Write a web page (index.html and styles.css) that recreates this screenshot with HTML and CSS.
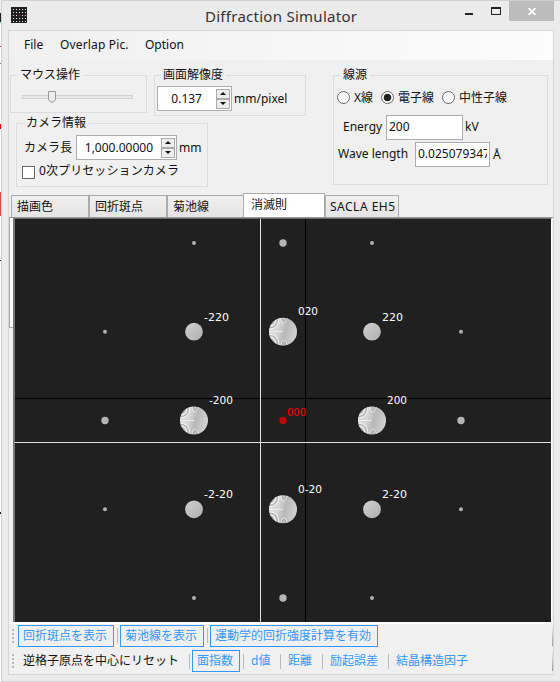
FILE: index.html
```html
<!DOCTYPE html>
<html lang="ja">
<head>
<meta charset="utf-8">
<title>Diffraction Simulator</title>
<link rel="stylesheet" href="styles.css">
</head>
<body>
<div class="edge"></div>
<div class="window">
  <header class="titlebar">
    <svg class="app-icon" width="16" height="16" viewBox="0 0 16 16">
      <defs><pattern id="dots" width="3" height="3" patternUnits="userSpaceOnUse"><rect x="2" y="2" width="1" height="1" fill="#e8e8e8"/></pattern></defs>
      <rect width="16" height="16" fill="#202020"/><rect width="15" height="15" fill="url(#dots)"/><rect x="8" y="8" width="1" height="1" fill="#d01818"/>
    </svg>
    <h1 class="title">Diffraction Simulator</h1>
    <div class="min"></div>
    <div class="max"></div>
    <div class="close"><svg width="8" height="7" viewBox="0 0 8 7"><path d="M.5 0 7.5 7M7.5 0 .5 7" stroke="#fff" stroke-width="1.7"/></svg></div>
  </header>
  <main class="client">
    <nav class="menu"><span class="m1">File</span><span class="m2">Overlap Pic.</span><span class="m3">Option</span></nav>
    <section class="settings">
      <div class="left">
        <div class="upper">
          <fieldset class="mouse"><legend>マウス操作</legend>
            <div class="slider"><svg width="9" height="12" viewBox="0 0 9 12"><path d="M.5.5h7v8l-2 2.5h-3l-2-2.5z" fill="#ececec" stroke="#999"/></svg></div>
          </fieldset>
          <fieldset class="resolution"><legend>画面解像度</legend>
            <div class="line">
              <div class="spin s1"><span>0.137</span><div class="arrows"><i><b class="up"></b></i><i><b class="down"></b></i></div></div>
              <span class="unit px">mm/pixel</span>
            </div>
          </fieldset>
        </div>
        <fieldset class="camera"><legend>カメラ情報</legend>
          <div class="line"><span class="cam-label">カメラ長</span>
            <div class="spin s2"><span>1,000.00000</span><div class="arrows"><i><b class="up"></b></i><i><b class="down"></b></i></div></div>
            <span class="unit mm">mm</span></div>
          <div class="line check"><span class="box"></span><span>0次プリセッションカメラ</span></div>
        </fieldset>
      </div>
      <fieldset class="source"><legend>線源</legend>
        <div class="radios">
          <span class="radio"></span><span class="r1">X線</span>
          <span class="radio on"></span><span class="r2">電子線</span>
          <span class="radio"></span><span class="r3">中性子線</span>
        </div>
        <div class="line energy"><span class="e-label">Energy</span><span class="input e-in">200</span><span class="unit kv">kV</span></div>
        <div class="line wave"><span class="w-label">Wave length</span><span class="input w-in"><span>0.025079347</span></span><span class="unit">Å</span></div>
      </fieldset>
    </section>
    <div class="tabs">
      <div class="tab t1">描画色</div><div class="tab t2">回折斑点</div><div class="tab t3">菊池線</div><div class="tab active">消滅則</div><div class="tab t5">SACLA EH5</div>
    </div>
    <div class="view">
      <div class="page-edge"></div>
      <svg class="pattern" width="536" height="403" viewBox="15 219 536 403">
        <defs>
          <linearGradient id="shade" x1="0" y1="0" x2="1" y2=".25"><stop offset="0" stop-color="#dedede"/><stop offset=".4" stop-color="#d6d6d6"/><stop offset=".65" stop-color="#b8b8b8"/><stop offset="1" stop-color="#cfcfcf"/></linearGradient>
          <linearGradient id="soft" x1="0" y1="0" x2="1" y2="1"><stop offset="0" stop-color="#d0d0d0"/><stop offset="1" stop-color="#afafaf"/></linearGradient>
          <clipPath id="disc"><circle r="14"/></clipPath>
          <g id="big"><circle r="14" fill="url(#shade)"/>
            <g clip-path="url(#disc)" fill="none" stroke-width="1">
              <g stroke="#fafafa" stroke-opacity=".75"><path d="M-14-2.5Q-4-2-4-14M-14-5.500Q-7-5-7-14M-14-8.500Q-10-8-10-14M-14 2.500Q-4 2-4 14M-14 5.500Q-7 5-7 14M-14 8.500Q-10 8-10 14M-14 0H0M-2-14Q-1-3 5-14M-2 14Q-1 3 5 14"/></g>
              <g stroke="#989898" stroke-opacity=".75"><path d="M-14-4Q-5.500-3.500-5.500-14M-14-7Q-8.500-6.500-8.500-14M-14 4Q-5.500 3.500-5.500 14M-14 7Q-8.500 6.500-8.500 14M-1-14Q0-5.500 4-14M-1 14Q0 5.500 4 14"/></g>
            </g></g>
          <circle id="mid" r="8.9" fill="url(#soft)"/>
          <circle id="small" r="3.7" fill="#b5b5b5"/>
          <circle id="tiny" r="2" fill="#b0b0b0"/>
        </defs>
        <rect x="15" y="219" width="536" height="403" fill="#202020"/>
        <path d="M305.5 219V622M15 398.5H551" stroke="#000"/>
        <path d="M260.5 219V622M15 442.5H551" stroke="#e0e0e0"/>
        <use href="#tiny" x="194" y="243"/><use href="#small" x="283" y="243"/><use href="#tiny" x="372" y="243"/>
        <use href="#tiny" x="105" y="331.7"/><use href="#mid" x="194" y="331.7"/><use href="#big" x="283" y="331.7"/><use href="#mid" x="372" y="331.7"/><use href="#tiny" x="461" y="331.7"/>
        <use href="#small" x="105" y="420.5"/><use href="#big" x="194" y="420.5"/><circle cx="283" cy="420.5" r="3.7" fill="#b90b0b"/><use href="#big" x="372" y="420.5"/><use href="#small" x="461" y="420.5"/>
        <use href="#tiny" x="105" y="509.3"/><use href="#mid" x="194" y="509.3"/><use href="#big" x="283" y="509.3"/><use href="#mid" x="372" y="509.3"/><use href="#tiny" x="461" y="509.3"/>
        <use href="#tiny" x="194" y="598"/><use href="#small" x="283" y="598"/><use href="#tiny" x="372" y="598"/>
        <g class="labels">
          <text x="204" y="321" textLength="25" lengthAdjust="spacingAndGlyphs">-220</text><text x="298" y="315" textLength="20" lengthAdjust="spacingAndGlyphs">020</text><text x="382" y="321" textLength="21" lengthAdjust="spacingAndGlyphs">220</text>
          <text x="209" y="404" textLength="24" lengthAdjust="spacingAndGlyphs">-200</text><text x="287" y="416" textLength="19" lengthAdjust="spacingAndGlyphs" class="origin">000</text><text x="387" y="404" textLength="20" lengthAdjust="spacingAndGlyphs">200</text>
          <text x="204" y="498" textLength="29" lengthAdjust="spacingAndGlyphs">-2-20</text><text x="298" y="493" textLength="24" lengthAdjust="spacingAndGlyphs">0-20</text><text x="382" y="498" textLength="25" lengthAdjust="spacingAndGlyphs">2-20</text>
        </g>
      </svg>
    </div>
    <div class="toolbar first"><i class="grip"></i><span class="button b1">回折斑点を表示</span><i class="sep"></i><span class="button b2">菊池線を表示</span><i class="sep"></i><span class="button b3">運動学的回折強度計算を有効</span><i class="end"></i></div>
    <div class="toolbar second"><i class="grip"></i><span class="reset">逆格子原点を中心にリセット</span><i class="sep"></i><span class="button b4">面指数</span><i class="sep"></i><span class="opt o1">d値</span><i class="sep"></i><span class="opt o2">距離</span><i class="sep"></i><span class="opt o3">励起誤差</span><i class="sep"></i><span class="opt o4">結晶構造因子</span><i class="end"></i></div>
  </main>
</div>
</body>
</html>
```
FILE: styles.css
```css
* { box-sizing: border-box; }
body { margin: 0; width: 560px; height: 682px; display: flex; overflow: hidden; background: #ebebeb; color: #111; font: 12px/16px "Noto Sans", "Noto Sans CJK JP", sans-serif; white-space: nowrap; }
.edge { width: 1px; background: linear-gradient(#f0f0f0 0 13px, #222 13px 22px, #a8e8ea 22px 24px, #fff 24px 46px, #c33 46px 47px, #fff 47px 63px, #777 63px 64px, #fff 64px 124px, #e00 124px 129px, #fff 129px 192px, #d05050 192px 216px, #fff 216px 260px, #701010 260px 261px, #fff 261px 512px, #222 512px 514px, #fff 514px); }
.window { width: 559px; height: 682px; border: 1px solid #d0d0d0; border-right: 0; padding-left: 6px; }
.titlebar { height: 29px; display: flex; align-items: flex-start; }
.app-icon { margin: 6px 0 0 3px; flex: none; }
.title { flex: none; margin: 4px 0 0 178px; width: 260px; font: 15px/22px "Noto Sans", sans-serif; letter-spacing: .27px; color: #333; }
.min { flex: none; width: 8px; height: 2px; margin-top: 12px; background: #222; }
.max { flex: none; width: 10px; height: 8px; margin: 6px 0 0 18px; border: 1px solid #222; border-top-width: 2px; }
.close { flex: none; width: 45px; height: 20px; margin-left: 8px; display: flex; align-items: center; justify-content: center; background: #bcbcbc; }
.client { width: 546px; height: 645px; border: 1px solid #d6d6d6; background: #f0f0f0; }
.menu { height: 29px; padding: 6px 0 0 15px; display: flex; background: linear-gradient(90deg, #f0f0f0, #fcfcfc); }
.m1 { width: 36px; } .m2 { width: 85px; letter-spacing: .15px; }
.settings { height: 134px; display: flex; padding-top: 7px; }
.left { width: 324px; }
.upper { height: 48px; display: flex; align-items: flex-start; }
fieldset { margin: 0; padding: 0; border: 1px solid #dcdcdc; min-width: 0; }
legend { height: 16px; padding: 0 3px; margin-left: 6px; }
.mouse { width: 137px; height: 46px; margin-left: 1px; }
.resolution { width: 152px; height: 49px; margin-left: 7px; }
.resolution legend { margin-left: 5px; }
.slider { width: 111px; height: 4px; margin: 12px 0 0 11px; border: 1px solid #d2d2d2; background: #e8eaea; }
.slider svg { display: block; margin: -5px 0 0 25px; }
.line { display: flex; align-items: center; }
.spin { height: 25px; border: 1px solid #abadb3; background: #fff; padding: 1px; display: flex; align-items: center; justify-content: flex-end; }
.s1 { width: 75px; margin: 3px 0 0 2px; }
.s2 { width: 101px; }
.arrows { margin-left: 14px; width: 14px; }
.s2 .arrows { margin-left: 8px; }
.arrows i { display: flex; width: 14px; height: 10px; border: 1px solid #aaa; background: #ececec; align-items: center; justify-content: center; }
.arrows b { border: 3px solid transparent; border-top: 0; border-bottom: 3px solid #111; }
.arrows .down { border-bottom: 0; border-top: 3px solid #111; }
.unit { margin-left: 3px; }
.unit.px { margin: 4px 0 0 2px; }
.unit.mm, .unit.kv { margin-left: 2px; }
.camera { position: relative; background: #f0f0f0; width: 192px; height: 72px; margin-left: 7px; }
.cam-label { width: 59px; padding-left: 7px; }
.camera .line:nth-of-type(1) { margin-top: 4px; }
.check { margin-top: 3px; letter-spacing: .1px; }
.box { width: 13px; height: 13px; margin: 2px 4px 0 5px; background: #fff; border: 1px solid #666; }
.source { width: 215px; height: 118px; }
.radios { display: flex; align-items: center; height: 19px; margin-top: 5px; padding-left: 3px; }
.radio { width: 13px; height: 13px; border-radius: 50%; background: #fff; border: 1px solid #666; margin-right: 4px; flex: none; }
.radio.on { background: radial-gradient(circle, #222 0 3.4px, #fff 4.2px); }
.r1 { width: 27px; } .r2 { width: 44px; }
.input { height: 25px; border: 1px solid #abadb3; background: #fff; padding: 3px 2px; overflow: hidden; }
.energy { margin-top: 8px; }
.e-label { width: 52px; padding-left: 9px; }
.e-label, .w-label, .kv { padding-bottom: 1px; }
.e-in { width: 77px; }
.wave { margin-top: 2px; }
.w-label { width: 81px; padding-left: 4px; }
.w-in { width: 75px; }
.w-in span { display: block; overflow: hidden; }
.tabs { height: 24px; padding-left: 2px; display: flex; align-items: flex-end; border-bottom: 1px solid #999; }
.tab { height: 22px; border: 1px solid #acacac; border-bottom: 0; padding: 3px 5px 0; background: linear-gradient(#f0f0f0, #e4e4e4); }
.t1, .t2 { width: 78px; } .t3 { width: 77px; border-right: 0; }
.active { width: 82px; height: 24px; margin-left: -1px; background: #fff; padding-left: 7px; }
.t5 { width: 74px; padding-left: 4px; letter-spacing: .5px; }
.view { height: 406px; display: flex; border-bottom: 2px solid #fff; }
.page-edge { width: 4px; height: 110px; background: #fff; border-left: 1px solid #aaa; border-bottom: 1px solid #aaa; }
.pattern { box-sizing: content-box; flex: none; border-left: 2px solid #777; border-top: 1px solid #696969; border-right: 1px solid #fff; }
.labels { font: 11px "DejaVu Sans", sans-serif; fill: #fff; }
.labels .origin { fill: #f00; }
.toolbar { display: flex; align-items: center; color: #3399ff; }
.toolbar.first { height: 23px; }
.toolbar.second { margin-top: 2px; height: 24px; }
.grip { flex: none; width: 2px; height: 14px; margin: 0 4px 0 3px; background: repeating-linear-gradient(#b8b8b8 0 2px, transparent 2px 4px); }
.end { width: 1px; height: 20px; margin-left: auto; background: linear-gradient(#f0f0f0, #999); }
.button { height: 22px; border: 1px solid #3399ff; padding: 2px 4px; flex: none; }
.b1 { width: 96px; } .b2 { width: 84px; } .b3 { width: 168px; } .b4 { width: 48px; }
.sep { flex: none; width: 1px; height: 15px; margin: 0 2px 0 3px; background: #bbb; }
.reset { color: #111; width: 163px; margin-left: 5px; }
.opt { padding-left: 5px; }
.o1 { width: 31px; } .o2 { width: 36px; } .o3 { width: 60px; }
```
